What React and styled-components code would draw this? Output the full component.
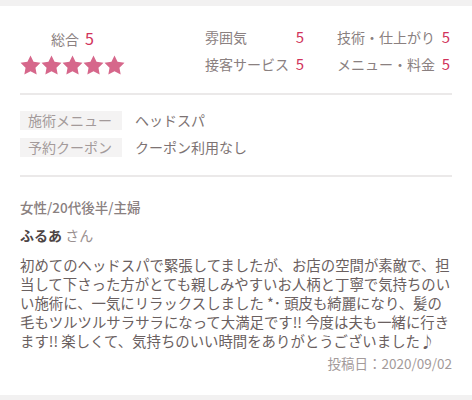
import styled, { createGlobalStyle } from "styled-components";

const GlobalStyle = createGlobalStyle`
    body {
        margin: 0;
        background: #f2f1f1;
        font-family: "Noto Sans CJK JP", "Noto Sans", sans-serif;
    }
`;

const scores = [
    { label: "雰囲気", value: 5 },
    { label: "技術・仕上がり", value: 5 },
    { label: "接客サービス", value: 5 },
    { label: "メニュー・料金", value: 5 },
];

const details = [
    { tag: "施術メニュー", value: "ヘッドスパ" },
    { tag: "予約クーポン", value: "クーポン利用なし" },
];

const Star = () => (
    <svg width="21" height="20" viewBox="0 0 24 23">
        <path
            fill="#d6678b"
            d="M12 .6l3.5 7.3 8 1.1-5.8 5.6 1.4 7.9L12 18.7l-7.1 3.8 1.4-7.9L.5 9l8-1.1z"
        />
    </svg>
);

const App = () => {
    return (
        <>
            <GlobalStyle />
            <Card>
                <Ratings>
                    <Total>
                        <TotalLabel>
                            総合<Score>5</Score>
                        </TotalLabel>
                        <Stars>
                            {[0, 1, 2, 3, 4].map((i) => (
                                <Star key={i} />
                            ))}
                        </Stars>
                    </Total>
                    <ScoreGrid>
                        {scores.map((s) => (
                            <ScoreItem key={s.label}>
                                <span>{s.label}</span>
                                <Score>{s.value}</Score>
                            </ScoreItem>
                        ))}
                    </ScoreGrid>
                </Ratings>
                <Details>
                    {details.map((d) => (
                        <DetailRow key={d.tag}>
                            <Tag>{d.tag}</Tag>
                            <span>{d.value}</span>
                        </DetailRow>
                    ))}
                </Details>
                <Review>
                    <Profile>女性/20代後半/主婦</Profile>
                    <Name>
                        <b>ふるあ</b> さん
                    </Name>
                    <Body>
                        初めてのヘッドスパで緊張してましたが、お店の空間が素敵で、担当して下さった方がとても親しみやすいお人柄と丁寧で気持ちのいい施術に、一気にリラックスしました
                        *･ 頭皮も綺麗になり、髪の毛もツルツルサラサラになって大満足です!!
                        今度は夫も一緒に行きます!! 楽しくて、気持ちのいい時間をありがとうございました♪
                    </Body>
                    <Posted>投稿日：2020/09/02</Posted>
                </Review>
            </Card>
        </>
    );
};

const Card = styled.div`
    margin: 6px 0 4px;
    background: #fff;
    padding: 0 20px;
    color: #7d7373;
`;

const Ratings = styled.div`
    display: flex;
    align-items: flex-start;
    height: 89px;
    border-bottom: 2px solid #ebe9e9;
    box-sizing: border-box;
`;

const Total = styled.div`
    display: flex;
    flex-direction: column;
    align-items: center;
    gap: 4px;
    padding-top: 20px;
    width: 105px;
`;

const TotalLabel = styled.div`
    font-size: 14px;
    line-height: 24px;
    color: #8a8080;
    span {
        margin-left: 6px;
        font-size: 16px;
    }
`;

const Stars = styled.div`
    display: flex;
`;

const Score = styled.span`
    color: #d1335b;
    font-size: 15px;
`;

const ScoreGrid = styled.div`
    margin-left: 80px;
    padding-top: 19px;
    display: grid;
    grid-template-columns: 99px 113px;
    column-gap: 33px;
    row-gap: 3px;
`;

const ScoreItem = styled.div`
    display: flex;
    justify-content: space-between;
    align-items: center;
    font-size: 14px;
    line-height: 24px;
    color: #8a8080;
`;

const Details = styled.div`
    display: flex;
    flex-direction: column;
    gap: 8px;
    padding: 16px 0 18px;
    border-bottom: 2px solid #ebe9e9;
`;

const DetailRow = styled.div`
    display: flex;
    align-items: center;
    gap: 13px;
    font-size: 14px;
    line-height: 19px;
    color: #7d7373;
`;

const Tag = styled.span`
    width: 102px;
    height: 19px;
    padding-left: 8px;
    box-sizing: border-box;
    background: #f4f3f3;
    color: #a39a9a;
`;

const Review = styled.div`
    padding: 20px 0 22px;
`;

const Profile = styled.div`
    font-size: 13.5px;
    font-weight: 500;
    line-height: 20px;
    color: #8a8080;
`;

const Name = styled.div`
    margin-top: 8px;
    font-size: 14px;
    line-height: 20px;
    color: #9a9090;
    b {
        color: #4d4444;
        font-weight: 700;
    }
`;

const Body = styled.p`
    margin: 10px 0 0;
    font-size: 14.4px;
    line-height: 19px;
    color: #6a6060;
`;

const Posted = styled.div`
    margin-top: 3px;
    text-align: right;
    font-size: 13.5px;
    line-height: 20px;
    color: #a39a9a;
`;

export default App;
